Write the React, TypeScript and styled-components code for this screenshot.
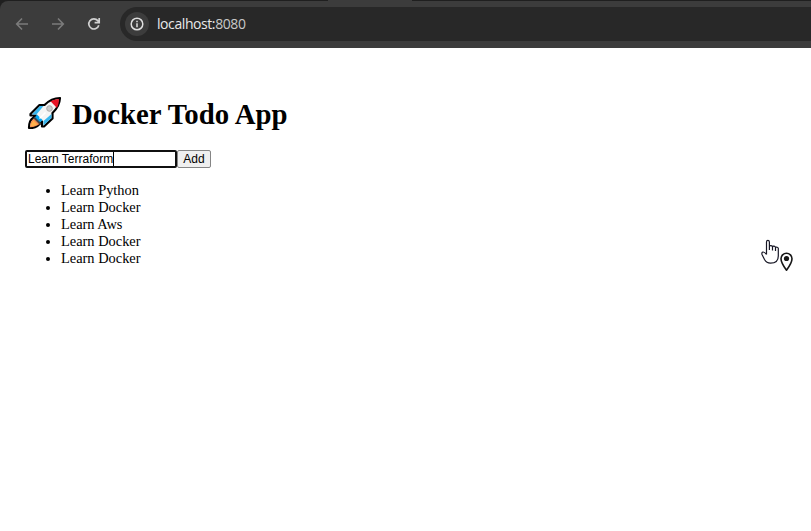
import React from "react";
import styled, { createGlobalStyle } from "styled-components";

const GlobalStyle = createGlobalStyle`
  * { box-sizing: border-box; }
  body { margin: 0; background: #fff; overflow: hidden; }
`;

const Window = styled.div`
  position: relative;
  width: 811px;
  height: 531px;
  overflow: hidden;
  background: #fff;
  color: #000;
  font-family: "Liberation Serif", "Times New Roman", serif;
`;

const TabStrip = styled.div`
  height: 48px;
  background: #1f1f1f;
  padding-top: 1px;
  background-image: linear-gradient(#3c3c3c, #3c3c3c);
  background-size: 84px 1px;
  background-position: 328px 0;
  background-repeat: no-repeat;
`;

const Toolbar = styled.div`
  height: 47px;
  display: flex;
  align-items: center;
  padding: 0 0 1px 14px;
  background: #3c3c3c;
  border-radius: 8px 0 0 0;
`;

const NavButton = styled.span<{ $disabled?: boolean }>`
  display: flex;
  width: 16px;
  height: 16px;
  margin-right: 20px;
  color: ${(p) => (p.$disabled ? "#7b7b7b" : "#d0d0d0")};
`;

const AddressBar = styled.div`
  flex: 1;
  height: 34px;
  margin-left: -2px;
  display: flex;
  align-items: center;
  padding-left: 5px;
  border-radius: 17px 0 0 17px;
  background: #282828;
`;

const SiteInfo = styled.span`
  display: flex;
  align-items: center;
  justify-content: center;
  width: 24px;
  height: 24px;
  border-radius: 50%;
  background: #3c3c3c;
  color: #dedede;
`;

const Url = styled.span`
  margin-left: 8px;
  font: 14px/20px "Open Sans", "Noto Sans", sans-serif;
  letter-spacing: -0.42px;
  color: #e8e8e8;
`;

const Port = styled.span`
  color: #c8c8c8;
`;

const Page = styled.main`
  padding: 47px 25px 0;
`;

const Title = styled.h1`
  display: flex;
  align-items: center;
  margin: 0;
  height: 37px;
  font-size: 28.8px;
  line-height: 37px;
  font-weight: 700;
`;

const TitleText = styled.span`
  margin-left: 7px;
  padding-top: 1px;
`;

const Form = styled.div`
  display: flex;
  margin-top: 18px;
  height: 18px;
  font: 12px/14px "Liberation Sans", Arial, sans-serif;
`;

const Field = styled.div`
  display: flex;
  align-items: center;
  width: 152px;
  padding-left: 1px;
  border: 2px solid #101010;
  border-radius: 2px;
`;

const Caret = styled.span`
  width: 1px;
  height: 14px;
  background: #000;
`;

const AddButton = styled.button`
  width: 34px;
  height: 18px;
  padding: 0;
  border: 1px solid #858585;
  border-radius: 2px;
  background: #efefef;
  color: #000;
  font: inherit;
`;

const List = styled.ul`
  margin: 14px 0 0;
  padding-left: 36px;
  font-size: 14.4px;
  line-height: 17px;
`;

const Pointer = styled.svg`
  position: absolute;
  left: 758px;
  top: 236px;
`;

const todos = ["Learn Python", "Learn Docker", "Learn Aws", "Learn Docker", "Learn Docker"];

const Arrow = () => (
  <svg width="16" height="16" viewBox="0 0 16 16" fill="none" stroke="currentColor" strokeWidth="1.6">
    <path d="M14 8H3M8 2.5 2.7 8 8 13.5" />
  </svg>
);

const ForwardArrow = () => (
  <svg width="16" height="16" viewBox="0 0 16 16" fill="none" stroke="currentColor" strokeWidth="1.6">
    <path d="M2 8h11M8 2.5 13.3 8 8 13.5" />
  </svg>
);

const Reload = () => (
  <svg width="16" height="16" viewBox="0 0 16 16" fill="none" stroke="currentColor" strokeWidth="1.7">
    <path d="M12.8 9.3A5.1 5.1 0 1 1 11.8 4.6L13 6M13.2 2v4.700H8.600" />
  </svg>
);

const Info = () => (
  <svg width="14" height="14" viewBox="0 0 14 14" fill="none" stroke="currentColor" strokeWidth="1.5">
    <circle cx="7" cy="7" r="5.8" />
    <path d="M7 6.2v4M7 3.7v1.5" />
  </svg>
);

const Rocket = () => (
  <svg width="40" height="37" viewBox="1 1 40 37" strokeLinejoin="round">
    <path
      d="M36 4C30 4 25.500 6 20.500 11H15.500L6.500 20V21.500H12L9 24Q5 26.500 5 34Q12 34 15 30.500L18 27.500V32.500H20L28.500 24.500V19Q35.500 12.500 36 4Z"
      fill="#f4f4f4" stroke="#000" strokeWidth="2.200"
    />
    <path d="M19.500 12H16L8 20.500H12.500ZM27.500 20 19.500 27V31.500L27.500 24Z" fill="#35b5ed" />
    <path d="m13 20.500 5.500 5.500-3 3-5-5Z" fill="#00a4ef" />
    <path d="m10 24.500 5.500 5.500Q12 33 6 33.200 6 27 10 24.500Z" fill="#f7894a" />
    <path d="m9.500 26.500 4 4Q11 32 6.500 32.500 7 28.500 9.500 26.500Z" fill="#ffb14c" />
    <path d="m10 23.500 6.500 6.500" stroke="#444" strokeWidth="2" />
    <path d="M35 5Q30 5.200 26.500 7.200L33 14Q35 9.500 35 5Z" fill="#e81224" />
    <circle cx="25.500" cy="14.500" r="2.800" fill="#ccc" stroke="#aaa" />
    <path d="m15.500 24.500 6-6" stroke="#fff" strokeWidth="1.400" />
  </svg>
);

export default function App() {
  return (
    <Window>
      <GlobalStyle />
      <TabStrip>
        <Toolbar>
          <NavButton $disabled><Arrow /></NavButton>
          <NavButton $disabled><ForwardArrow /></NavButton>
          <NavButton><Reload /></NavButton>
          <AddressBar>
            <SiteInfo><Info /></SiteInfo>
            <Url>localhost:<Port>8080</Port></Url>
          </AddressBar>
        </Toolbar>
      </TabStrip>
      <Page>
        <Title><Rocket /><TitleText>Docker Todo App</TitleText></Title>
        <Form>
          <Field>Learn Terraform<Caret /></Field>
          <AddButton>Add</AddButton>
        </Form>
        <List>{todos.map((todo, i) => <li key={i}>{todo}</li>)}</List>
      </Page>
      <Pointer width="38" height="38" viewBox="0 0 38 38" fill="none" strokeLinejoin="round">
        <path
          d="M8.500 18.500V6Q8.500 4.300 9.900 4.300T11.400 6V14M11.400 10.500Q11.600 9.500 13 9.600T14.500 11V14.500M14.500 11Q14.800 9.900 16.100 10.200T17.500 11.500V15M17.500 11.500Q18 10.800 19.200 11.200T20.300 12.500V20Q20.300 27.200 12.500 27.200 8.500 27 6.500 23.500L4 18.500Q3.500 16.200 5 16 6.500 15.800 8.500 18.500"
          stroke="#171725" strokeWidth="1.200"
        />
        <path d="M28.500 17.200a5.500 5.500 0 0 0-5.500 5.500c0 4 5.500 11.500 5.500 11.500s5.500-7.500 5.500-11.500a5.500 5.500 0 0 0-5.500-5.500Z" fill="#fff" stroke="#171717" strokeWidth="1.600" />
        <circle cx="28.500" cy="22.500" r="2.600" fill="#171717" />
      </Pointer>
    </Window>
  );
}
